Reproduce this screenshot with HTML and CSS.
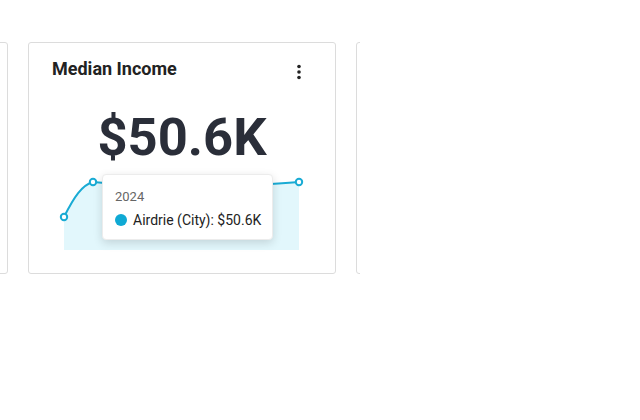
FILE: index.html
```html
<!DOCTYPE html>
<html lang="en">
<head>
    <meta charset="UTF-8">
    <meta name="viewport" content="width=device-width, initial-scale=1.0">
    <title>Median Income</title>

    <link rel="stylesheet" href="styles.css">
</head>
<body>
    <div class="carousel">
        <div class="track">
            <div class="card"></div>

            <div class="card">
                <div class="card-head">
                    <h2 class="card-title">Median Income</h2>
                    <svg class="kebab" width="6" height="16" viewBox="0 0 6 16">
                        <circle cx="3" cy="2.5" r="1.8" fill="#222"/>
                        <circle cx="3" cy="8" r="1.8" fill="#222"/>
                        <circle cx="3" cy="13.5" r="1.8" fill="#222"/>
                    </svg>
                </div>
                <div class="big-value">$50.6K</div>
                <div class="chart">
                    <svg width="260" height="84" viewBox="0 0 260 84">
                        <path d="M12,48 C22,28 30,16 41,13 C70,16 130,18 180,17 C205,16 225,15 247,13 L247,81 L12,81 Z" fill="#e2f7fc"/>
                        <path d="M12,48 C22,28 30,16 41,13 C70,16 130,18 180,17 C205,16 225,15 247,13" fill="none" stroke="#19abd4" stroke-width="2"/>
                        <circle cx="12" cy="48" r="3.2" fill="#fff" stroke="#19abd4" stroke-width="2"/>
                        <circle cx="41" cy="13" r="3.2" fill="#fff" stroke="#19abd4" stroke-width="2"/>
                        <circle cx="247" cy="13" r="3.2" fill="#fff" stroke="#19abd4" stroke-width="2"/>
                    </svg>
                    <div class="tooltip">
                        <div class="tip-year">2024</div>
                        <div class="tip-row">
                            <span class="tip-dot"></span>
                            <span>Airdrie (City): $50.6K</span>
                        </div>
                    </div>
                </div>
            </div>

            <div class="card"></div>
        </div>
    </div>
</body>
</html>
```

FILE: styles.css
```css
body {
    margin: 0;
    background-color: #fff;
    font-family: Roboto, 'Liberation Sans', sans-serif;
}
.carousel {
    width: 360px;
    overflow: hidden;
    padding-top: 42px;
}
.track {
    display: flex;
    gap: 20px;
    margin-left: -300px;
}
.card {
    flex: 0 0 308px;
    box-sizing: border-box;
    height: 232px;
    border: 1px solid #dcdcdc;
    border-radius: 3px;
    background-color: #fff;
    padding: 15px 23px 0 23px;
}
.card-head {
    display: flex;
    justify-content: space-between;
    align-items: flex-start;
}
.card-title {
    margin: 0;
    font-size: 18px;
    font-weight: 700;
    color: #222;
}
.kebab {
    margin-top: 6px;
    margin-right: 10px;
}
.big-value {
    margin-top: 26px;
    text-align: center;
    font-size: 52.5px;
    font-weight: 700;
    color: #2a2e39;
}
.chart {
    position: relative;
    margin-top: 1px;
}
.chart svg {
    display: block;
}
.tooltip {
    position: absolute;
    left: 50px;
    top: 5px;
    width: 171px;
    height: 66px;
    box-sizing: border-box;
    padding: 14px 8px 10px 12px;
    background-color: #fff;
    border: 1px solid #ececec;
    border-radius: 4px;
    box-shadow: 0 3px 10px rgba(0,0,0,0.14);
    white-space: nowrap;
}
.tip-year {
    font-size: 13px;
    color: #666;
    line-height: 16px;
}
.tip-row {
    display: flex;
    align-items: center;
    gap: 6px;
    margin-top: 7px;
    font-size: 14px;
    color: #222;
}
.tip-dot {
    flex: none;
    width: 12px;
    height: 12px;
    border-radius: 50%;
    background-color: #0fa9d4;
}
```
